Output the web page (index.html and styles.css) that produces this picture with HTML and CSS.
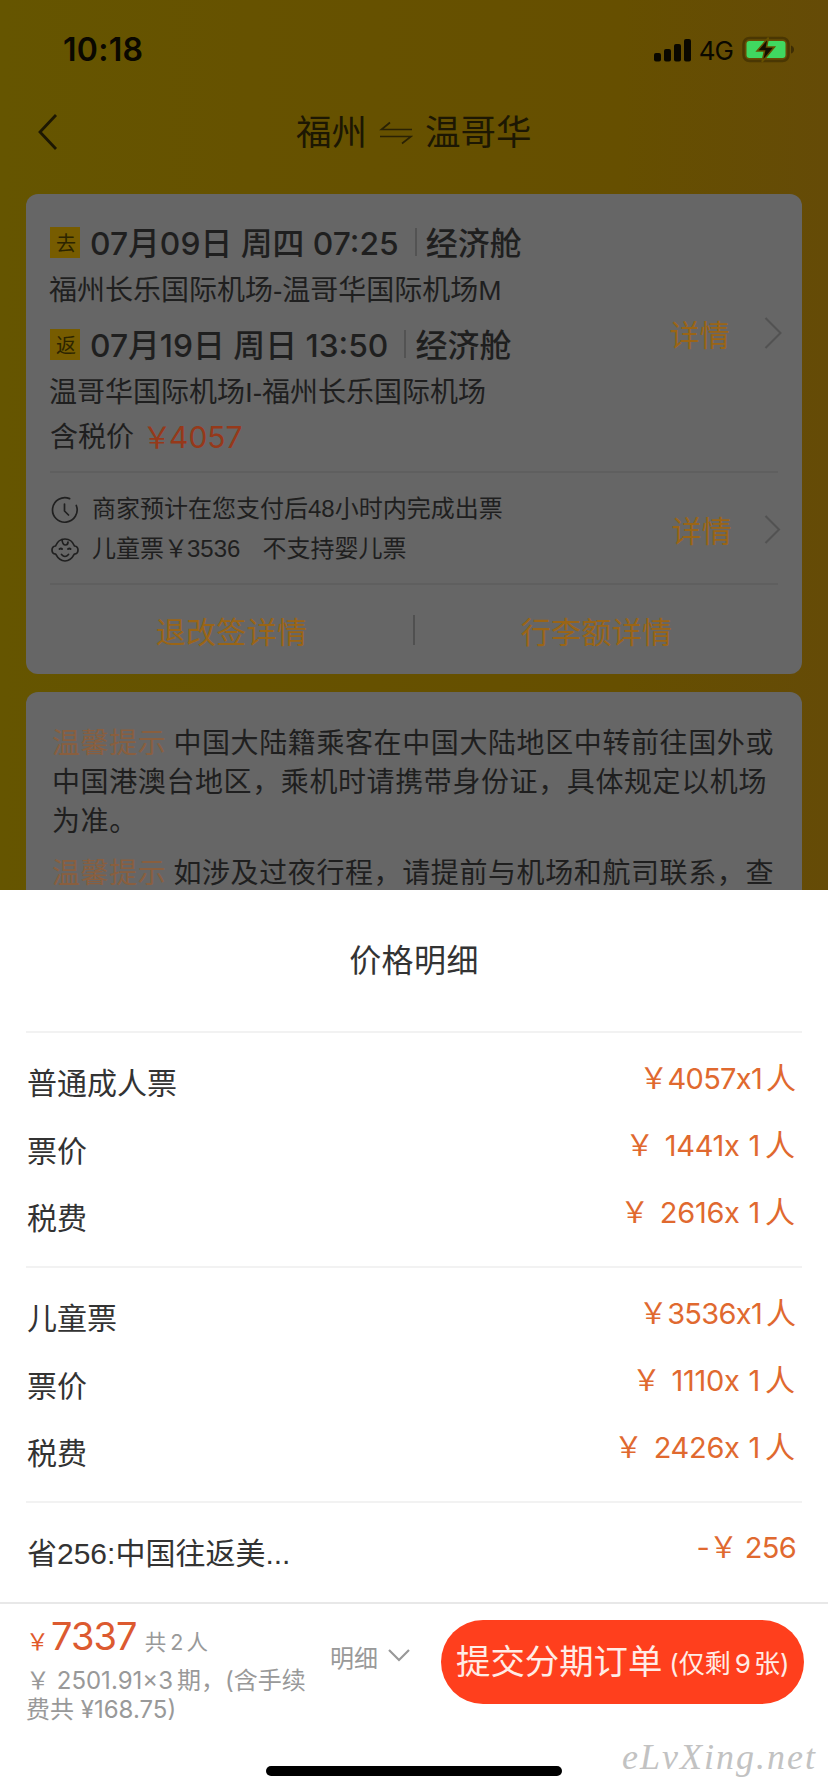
FILE: index.html
```html
<!DOCTYPE html>
<html lang="zh-CN">
<head>
<meta charset="utf-8">
<title>价格明细</title>
<link rel="stylesheet" href="styles.css">
</head>
<body>
<div class="screen">
  <div class="page">
    <div class="status">
      <span class="time">10:18</span>
      <div class="status-right">
        <svg class="signal" width="38" height="24" viewBox="0 0 38 24"><rect x="0" y="15" width="7" height="8.500" rx="2"/><rect x="10" y="11" width="7" height="12.500" rx="2"/><rect x="20" y="6" width="7" height="17.500" rx="2"/><rect x="30" y="1" width="7" height="22.500" rx="2"/></svg>
        <span class="net">4G</span>
        <svg class="battery" width="53" height="28" viewBox="0 0 53 28"><rect x="1.500" y="2" width="45" height="23" rx="6" fill="none" stroke="#4a3703" stroke-width="2.500"/><rect x="4.500" y="5" width="39" height="17" rx="3" fill="#40d860"/><path d="M49 9.500v8q3-1 3-4t-3-4z" fill="#3d2d05"/><path d="M26.500 1.500L15 15h7.500L20 26 32.500 11h-8z" fill="#130f00" stroke="#665000" stroke-width="1.500"/></svg>
      </div>
    </div>
    <div class="nav">
      <svg class="back" width="20" height="38" viewBox="0 0 20 38"><path d="M18 2L2 19l16 17" fill="none" stroke="#1c1703" stroke-width="2.800"/></svg>
      <span class="city">福州</span>
      <svg class="swap" width="34" height="24" viewBox="0 0 34 24"><path d="M33 8.500H2.500L11 1.500M1 15.500h31L23 22.500" fill="none" stroke="#2a2204" stroke-width="1.700"/></svg>
      <span class="city">温哥华</span>
    </div>
    <div class="card trip">
      <div class="legs">
        <div class="leg-list">
          <div class="leg"><span class="tag">去</span><span class="when">07月09日 周四 07:25</span><i class="bar"></i><span class="cabin">经济舱</span></div>
          <div class="airports">福州长乐国际机场-温哥华国际机场M</div>
          <div class="leg"><span class="tag">返</span><span class="when">07月19日 周日 13:50</span><i class="bar"></i><span class="cabin">经济舱</span></div>
          <div class="airports">温哥华国际机场I-福州长乐国际机场</div>
          <div class="tax"><span>含税价</span><span class="tax-price"><span class="yen">￥</span>4057</span></div>
        </div>
        <div class="more first"><span>详情</span><svg width="18" height="34" viewBox="0 0 18 34"><path d="M1.500 2L16.500 17l-15 15" fill="none" stroke="#525252" stroke-width="2"/></svg></div>
      </div>
      <div class="notes">
        <div class="note-list">
          <div class="note"><svg width="28" height="28" viewBox="0 0 28 28" fill="none" stroke="#202020" stroke-width="1.700" stroke-linecap="round"><path d="M18.600 2.600A12.300 12.300 0 1 0 25.300 9.500"/><path d="M13.500 8v7l4 4"/></svg><span>商家预计在您支付后48小时内完成出票</span></div>
          <div class="note"><svg width="28" height="28" viewBox="0 0 28 28" fill="none" stroke="#202020" stroke-width="1.700" stroke-linecap="round"><path d="M4.500 10C6.500 5 10 3 14 3s7.500 2 9.500 7c2 .2 3.500 1.800 3.500 4s-1.500 4-3.700 4.200C21 22.500 18 25 14 25s-7-2.500-9.300-6.800C2.500 18 1 16.200 1 14s1.500-3.800 3.500-4z"/><path d="M11 3.500q.5 5.500 3.500 5.500 2.500 0 2.500-3M10.500 18.500q3.500 4 7 0"/><path d="M8.500 13q1.500-1 2.500 0M17 13q1.500-1 2.500 0" stroke-width="2"/></svg><span class="child">儿童票<span class="yen">￥</span>3536</span><span class="infant">不支持婴儿票</span></div>
        </div>
        <div class="more second"><span>详情</span><svg width="17" height="31" viewBox="0 0 17 31"><path d="M1.500 2L15 15.500l-13.500 13.500" fill="none" stroke="#525252" stroke-width="2"/></svg></div>
      </div>
      <div class="links"><span>退改签详情</span><i></i><span>行李额详情</span></div>
    </div>
    <div class="card tips">
      <p><b>温馨提示</b>中国大陆籍乘客在中国大陆地区中转前往国外或<br>中国港澳台地区，乘机时请携带身份证，具体规定以机场<br>为准。</p>
      <p><b>温馨提示</b>如涉及过夜行程，请提前与机场和航司联系，查</p>
    </div>
  </div>
  <div class="sheet">
    <h1>价格明细</h1>
    <div class="groups">
      <div class="group">
        <div class="row"><span>普通成人票</span><em>￥4057x1<u>人</u></em></div>
        <div class="row sub"><span>票价</span><em><span class="sign">￥</span> 1441x 1<u>人</u></em></div>
        <div class="row sub"><span>税费</span><em><span class="sign">￥</span> 2616x 1<u>人</u></em></div>
      </div>
      <div class="group">
        <div class="row"><span>儿童票</span><em>￥3536x1<u>人</u></em></div>
        <div class="row sub"><span>票价</span><em><span class="sign">￥</span> 1110x 1<u>人</u></em></div>
        <div class="row sub"><span>税费</span><em><span class="sign">￥</span> 2426x 1<u>人</u></em></div>
      </div>
      <div class="group last">
        <div class="row"><span>省256:中国往返美...</span><em>-￥ 256</em></div>
      </div>
    </div>
    <div class="footer">
      <div class="sum">
        <div class="total"><span class="cur">￥</span><strong>7337</strong><span class="people">共<u>2</u>人</span></div>
        <div class="plan plan-a">￥ 2501.91×3<u>期</u>，(含手续</div>
        <div class="plan plan-b">费共 ¥168.75)</div>
      </div>
      <div class="toggle"><span>明细</span><svg width="22" height="15" viewBox="0 0 22 15"><path d="M1 2l10 10L21 2" fill="none" stroke="#999" stroke-width="2.200"/></svg></div>
      <div class="submit"><span class="main">提交分期订单</span><span class="left">(仅剩<u>9</u>张)</span></div>
    </div>
    <div class="home"></div>
    <div class="mark">eLvXing.net</div>
  </div>
</div>
</body>
</html>
```
FILE: styles.css
```css
* { box-sizing: border-box; }
body {
  margin: 0;
  font-family: Inter, "Noto Sans CJK SC", sans-serif;
  color: #1f1f1f;
}
i, em { font-style: normal; }
u { text-decoration: none; }
svg { flex: none; display: block; }
.screen { position: relative; width: 828px; height: 1792px; overflow: hidden; display: flex; flex-direction: column; background: #fff; white-space: nowrap; }
.page { height: 890px; flex: none; overflow: hidden; padding: 0 26px; background: linear-gradient(90deg, #655500 0%, #665200 30%, #664f00 75%, #654b07 100%); }

.status { height: 98px; display: flex; justify-content: space-between; padding: 2px 7px 0 37px; align-items: center; color: #0a0800; }
.time { font-size: 32px; font-weight: 600; line-height: 38px; letter-spacing: .3px; }
.status-right { display: flex; align-items: center; height: 28px; }
.signal { fill: #0a0800; }
.net { font-size: 26px; line-height: 28px; margin: 1px 9px 0 7px; letter-spacing: -1px; font-weight: 400; }
.nav { height: 96px; display: flex; align-items: flex-start; padding: 13px 0 0 12px; color: #1c1703; }
.back { margin: 2px 238px 0 0; }
.city { font-size: 35.5px; line-height: 44px; }
.swap { margin: 10px 12px 0 12px; }

.card { background: #666; border-radius: 12px; }
.trip { height: 480px; padding: 24px 24px 0; }
.legs { height: 255px; display: flex; justify-content: space-between; border-bottom: 2px solid #5f5f5f; }
.leg { height: 51px; display: flex; align-items: center; }
.tag { width: 30px; height: 31px; margin: -3px 10px 0 0; padding-left: 6px; background: #775c00; font-size: 20px; line-height: 34px; color: #2c2400; }
.when, .cabin { font-size: 31.8px; font-weight: 500; line-height: 50px; }
.cabin { font-size: 32px; }
.bar { width: 2px; height: 28px; margin: -4px 9px 0 16px; background: #535353; }
.airports { height: 51px; line-height: 43px; font-size: 28px; margin-left: -1px; font-family: "Liberation Sans", "Noto Sans CJK SC", sans-serif; }
.tax { display: flex; gap: 8px; font-size: 28px; line-height: 42px; margin-top: -6px; }
.tax-price { font-size: 30px; color: #96391a; }
.yen { letter-spacing: -3px; }
.more { display: flex; align-items: center; color: #9a6516; font-size: 30px; letter-spacing: .3px; }
.first { height: 40px; margin: 95px -4px 0 0; gap: 34px; }
.notes { height: 112px; display: flex; justify-content: space-between; border-bottom: 2px solid #5f5f5f; }
.note-list { padding-top: 16px; }
.note { height: 40px; display: flex; align-items: center; font-size: 24px; line-height: 34px; font-family: "Liberation Sans", "Noto Sans CJK SC", sans-serif; }
.note svg { margin: 2px 13px 0 1px; }
.note .yen { letter-spacing: -1px; }
.note .infant { margin-left: 22px; }
.second { height: 40px; margin: 36px -3px 0 0; gap: 32px; }
.links { display: flex; height: 90px; align-items: center; color: #9a6516; font-size: 30px; letter-spacing: .3px; }
.links span { flex: 1; text-align: center; }
.links i { width: 2px; height: 30px; background: #505050; }
.tips { margin-top: 18px; height: 220px; padding: 32px 24px 0 26px; font-size: 28px; line-height: 39px; letter-spacing: .6px; }
.tips p { margin: 0 0 13px; }
.tips b { font-weight: 400; color: #895f3f; margin-right: 7px; }

.sheet { height: 902px; position: relative; color: #333; background: #fff; }
h1 { margin: 0; height: 141px; text-align: center; font-size: 32px; font-weight: 400; line-height: 141px; letter-spacing: .4px; }
.groups { height: 571px; padding: 0 26px; }
.group { height: 235px; border-top: 2px solid #f2f2f2; padding: 16px 6px 0 1px; }
.row { display: flex; justify-content: space-between; height: 67.5px; font-size: 30px; line-height: 69px; font-family: "Liberation Sans", "Noto Sans CJK SC", sans-serif; }
.row em { color: #e0692f; line-height: 58px; letter-spacing: -.7px; font-size: 29px; font-family: Inter, "Noto Sans CJK SC", sans-serif; }
.row u { font-size: 30px; margin-left: 4px; letter-spacing: 0; }
.sub em { line-height: 57px; word-spacing: 1px; letter-spacing: -.3px; }
.sub u { margin: 0 1px 0 5px; }
.sign { margin-right: 2px; }
.footer { height: 138px; border-top: 2px solid #e8e8e8; display: flex; color: #999; padding-left: 26px; }
.sum { width: 304px; padding-top: 8px; }
.total { height: 49px; display: flex; align-items: baseline; line-height: 48px; }
.cur { color: #e0592b; font-size: 23px; }
.total strong { font-size: 38px; font-weight: 400; color: #dc5a30; letter-spacing: -.9px; margin-left: 2px; }
.people { font-size: 21.5px; margin-left: 8px; }
.people u { margin: 0 3px 0 4px; }
.plan { font-size: 24px; line-height: 29px; height: 29px; }
.plan u { margin-left: 4px; }
.plan-a { margin-top: 5px; }
.toggle { width: 111px; display: flex; padding-top: 37px; font-size: 24px; line-height: 36px; }
.toggle svg { margin: 7px 0 0 10px; }
.submit { width: 363px; height: 84px; margin-top: 16px; background: #ff3f1d; border-radius: 42px; color: #ffece6; padding-left: 15px; display: flex; line-height: 84px; }
.main { font-size: 34.4px; }
.left { font-size: 26px; margin: 2px 0 0 7px; }
.left u { margin: 0 3px 0 4px; }
.home { width: 296px; height: 10px; border-radius: 5px; background: #000; margin: 26px auto 0; }
.mark { position: absolute; left: 622px; top: 842px; color: #c2c2c2; font: italic 36px/50px "Liberation Serif", serif; letter-spacing: 2px; }
```
